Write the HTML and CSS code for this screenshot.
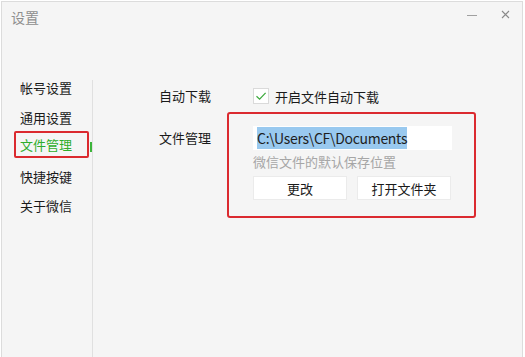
FILE: index.html
```html
<!DOCTYPE html>
<html lang="zh-CN">

<head>
    <meta charset="UTF-8">
    <meta name="viewport" content="width=device-width, initial-scale=1.0">
    <title>设置</title>
    <link rel="stylesheet" href="styles.css">
</head>

<body>
    <div class="window">
        <div class="titlebar">
            <span class="title">设置</span>
            <div class="controls">
                <svg class="btn-min" width="10" height="10" viewBox="0 0 10 10">
                    <line x1="0" y1="5.5" x2="10" y2="5.5" stroke="#a0a0a0" stroke-width="1" />
                </svg>
                <svg class="btn-close" width="9" height="9" viewBox="0 0 9 9">
                    <path d="M1 1 L8 8 M8 1 L1 8" stroke="#8a8a8a" stroke-width="1.1" fill="none" />
                </svg>
            </div>
        </div>

        <div class="main">
            <div class="sidebar">
                <ul class="nav">
                    <li>帐号设置</li>
                    <li>通用设置</li>
                    <li class="active"><span class="mark">文件管理</span></li>
                    <li>快捷按键</li>
                    <li>关于微信</li>
                </ul>
            </div>

            <div class="panel">
                <div class="row first">
                    <span class="label">自动下载</span>
                    <label class="check-option">
                        <span class="checkbox">
                            <svg width="12" height="12" viewBox="0 0 12 12">
                                <path d="M1.5 6.2 L4.6 9.2 L10.6 2.8" stroke="#3aa93a" stroke-width="1.2" fill="none" />
                            </svg>
                        </span>
                        开启文件自动下载
                    </label>
                </div>

                <div class="row">
                    <span class="label file-label">文件管理</span>
                    <div class="file-box">
                        <div class="path-field"><span class="selected">C:\Users\CF\Documents</span></div>
                        <p class="hint">微信文件的默认保存位置</p>
                        <div class="actions">
                            <button class="plain-btn">更改</button>
                            <button class="plain-btn">打开文件夹</button>
                        </div>
                    </div>
                </div>
            </div>
        </div>
    </div>
</body>

</html>
```

FILE: styles.css
```css
body {
    margin: 0;
    background-color: #fff;
    font-family: 'Noto Sans CJK SC', 'Noto Sans', sans-serif;
    overflow: hidden;
}

.window {
    margin: 1px 0 0 1px;
    width: 522px;
    height: 370px;
    box-sizing: border-box;
    border: 1px solid #dcdcdc;
    background-color: #f5f5f5;
    display: flex;
    flex-direction: column;
}

.titlebar {
    height: 78px;
    display: flex;
    justify-content: space-between;
    align-items: flex-start;
    padding: 5px 12px 0 9px;
    box-sizing: border-box;
}

.title {
    font-size: 14px;
    line-height: 20px;
    color: #8f8f8f;
}

.controls {
    display: flex;
    gap: 24px;
    padding-top: 3px;
}

.main {
    flex: 1;
    display: flex;
}

.sidebar {
    width: 91px;
    box-sizing: border-box;
    border-right: 1px solid #e0e0e0;
}

.nav {
    list-style-type: none;
    margin: -7px 0 0 0;
    padding: 0;
}

.nav li {
    height: 29.5px;
    display: flex;
    align-items: center;
    padding-left: 18px;
    font-size: 13px;
    color: #1a1a1a;
    position: relative;
}

.nav li.active {
    color: #2fad2c;
}

.nav li.active::after {
    content: '';
    position: absolute;
    right: 0;
    top: 10px;
    width: 2px;
    height: 10px;
    background-color: #3cb43a;
}

.mark {
    margin: 0 0 5px -6px;
    width: 75px;
    height: 27px;
    box-sizing: border-box;
    padding: 1px 4px 0;
    line-height: 22px;
    border: 2px solid #db2a2f;
    border-radius: 2px;
}

.panel {
    flex: 1;
    padding-left: 66px;
}

.row {
    display: flex;
    align-items: flex-start;
}

.row.first {
    margin-top: 8px;
    height: 16px;
    align-items: center;
    margin-bottom: 8px;
}

.label {
    width: 68px;
    font-size: 13px;
    color: #1a1a1a;
    line-height: 20px;
    flex-shrink: 0;
}

.file-label {
    margin-top: 16px;
}

.check-option {
    margin-left: 26px;
    display: flex;
    align-items: center;
    gap: 6px;
    font-size: 13px;
    color: #1a1a1a;
}

.checkbox {
    width: 16px;
    height: 16px;
    box-sizing: border-box;
    border: 1px solid #dadada;
    background-color: #fff;
    display: flex;
    justify-content: center;
    align-items: center;
}

.file-box {
    width: 249px;
    box-sizing: border-box;
    border: 2px solid #db2a2f;
    border-radius: 3px;
    padding: 12px 22px 16px 24px;
}

.path-field {
    height: 24px;
    background-color: #fff;
    padding: 1px 0 0 4px;
    box-sizing: border-box;
    font-size: 14px;
    letter-spacing: -0.3px;
    color: #1e1e1e;
}

.selected {
    display: inline-block;
    height: 22px;
    line-height: 22px;
    background-color: #99c9ef;
}

.hint {
    margin: 2px 0 0;
    font-size: 13px;
    line-height: 20px;
    color: #a6a6a6;
}

.actions {
    display: flex;
    gap: 10px;
    margin-top: 4px;
}

.plain-btn {
    width: 94px;
    height: 24px;
    padding: 0;
    border: 1px solid #ebebeb;
    background-color: #fff;
    font-family: inherit;
    font-size: 13px;
    color: #1a1a1a;
}
```
